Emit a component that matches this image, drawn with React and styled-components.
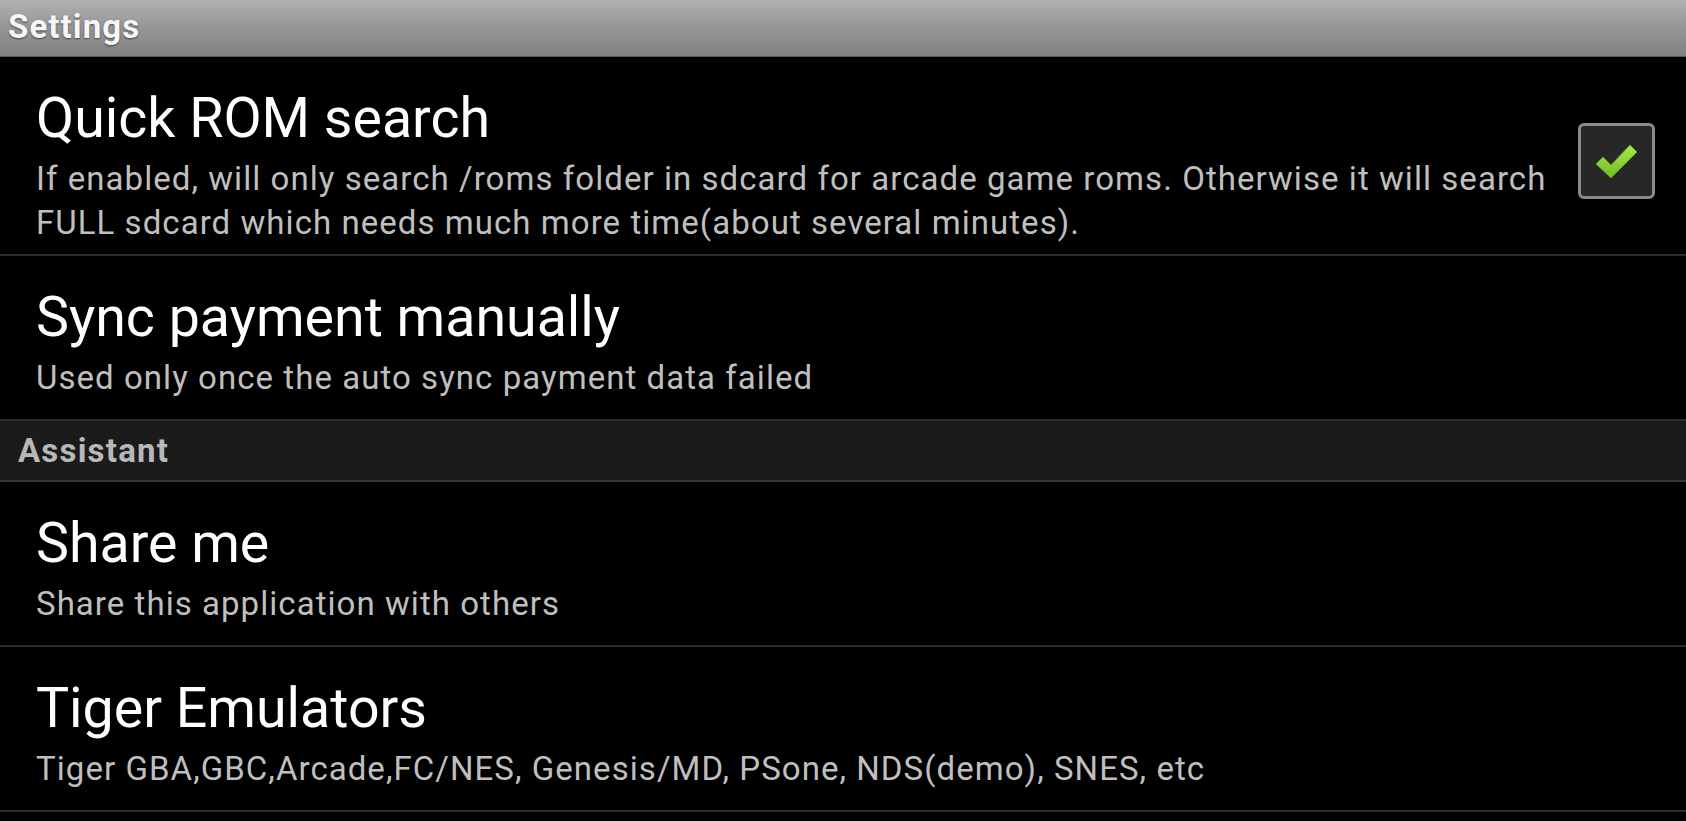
import React from 'react';
import styled, { createGlobalStyle } from 'styled-components';

const GlobalStyle = createGlobalStyle`
  html, body {
    margin: 0;
    padding: 0;
    background: #000;
  }
  body {
    font-family: Roboto, "Noto Sans", "Liberation Sans", sans-serif;
    -webkit-font-smoothing: antialiased;
  }
`;

const Screen = styled.div`
  width: 1686px;
  height: 821px;
  overflow: hidden;
  background: #000;
  display: flex;
  flex-direction: column;
`;

const TitleBar = styled.div`
  height: 57px;
  flex-shrink: 0;
  display: flex;
  align-items: center;
  padding-left: 8px;
  background: linear-gradient(to bottom, #b0b0b0 0%, #939393 55%, #828282 100%);
  border-bottom: 1px solid #5a5a5a;
  box-sizing: border-box;
`;

const TitleText = styled.span`
  font-size: 33px;
  font-weight: 700;
  letter-spacing: 1.1px;
  color: #f6f6f6;
  text-shadow: 0 1px 2px rgba(0, 0, 0, 0.55);
  margin-top: -3px;
`;

const Row = styled.div`
  height: ${(p) => p.h}px;
  flex-shrink: 0;
  box-sizing: border-box;
  display: flex;
  align-items: center;
  padding: ${(p) => p.pt || 10}px 31px 0 36px;
  border-bottom: 2px solid #2b2b2b;
`;

const TextCol = styled.div`
  flex: 1;
  min-width: 0;
  display: flex;
  flex-direction: column;
  padding-right: 30px;
`;

const ItemTitle = styled.div`
  font-size: 55.5px;
  color: #fff;
  line-height: 64px;
`;

const Summary = styled.div`
  font-size: 33px;
  letter-spacing: 1.05px;
  color: #bfbfbf;
  line-height: 44px;
  margin-top: 6px;
`;

const SectionHeader = styled.div`
  height: 61px;
  flex-shrink: 0;
  box-sizing: border-box;
  display: flex;
  align-items: center;
  padding-left: 18px;
  background: #1b1b1b;
  border-bottom: 2px solid #353535;
`;

const SectionText = styled.span`
  font-size: 33px;
  font-weight: 700;
  letter-spacing: 1.2px;
  color: #b8b8b8;
`;

const CheckBox = styled.div`
  width: 77px;
  height: 76px;
  flex-shrink: 0;
  box-sizing: border-box;
  border: 3px solid #8a8a8a;
  border-radius: 6px;
  background: #272727;
  display: flex;
  align-items: center;
  justify-content: center;
  margin-top: -10px;
`;

function CheckMark() {
  return (
    <svg width="48" height="40" viewBox="0 0 48 40">
      <defs>
        <linearGradient id="chk" x1="0" y1="0" x2="0" y2="1">
          <stop offset="0" stopColor="#a8ea4c" />
          <stop offset="1" stopColor="#70bb27" />
        </linearGradient>
      </defs>
      <path
        d="M3 23 L10 16 L18 24 L37 4 L44 11 L18 37 Z"
        fill="url(#chk)"
        stroke="#5c9c1f"
        strokeWidth="1"
        strokeLinejoin="round"
      />
    </svg>
  );
}

const prefs = [
  { id: 'sync', title: 'Sync payment manually', summary: 'Used only once the auto sync payment data failed' },
];

const assistant = [
  { id: 'share', title: 'Share me', summary: 'Share this application with others' },
  { id: 'tiger', title: 'Tiger Emulators', summary: 'Tiger GBA,GBC,Arcade,FC/NES, Genesis/MD, PSone, NDS(demo), SNES, etc' },
];

export default function App() {
  return (
    <>
      <GlobalStyle />
      <Screen>
        <TitleBar>
          <TitleText>Settings</TitleText>
        </TitleBar>

        <Row h={199} pt={20}>
          <TextCol>
            <ItemTitle>Quick ROM search</ItemTitle>
            <Summary>
              If enabled, will only search /roms folder in sdcard for arcade game roms. Otherwise it will search FULL sdcard which needs much more time(about several minutes).
            </Summary>
          </TextCol>
          <CheckBox>
            <CheckMark />
          </CheckBox>
        </Row>

        {prefs.map((p) => (
          <Row key={p.id} h={165}>
            <TextCol>
              <ItemTitle>{p.title}</ItemTitle>
              <Summary>{p.summary}</Summary>
            </TextCol>
          </Row>
        ))}

        <SectionHeader>
          <SectionText>Assistant</SectionText>
        </SectionHeader>

        {assistant.map((p) => (
          <Row key={p.id} h={165}>
            <TextCol>
              <ItemTitle>{p.title}</ItemTitle>
              <Summary>{p.summary}</Summary>
            </TextCol>
          </Row>
        ))}
      </Screen>
    </>
  );
}
